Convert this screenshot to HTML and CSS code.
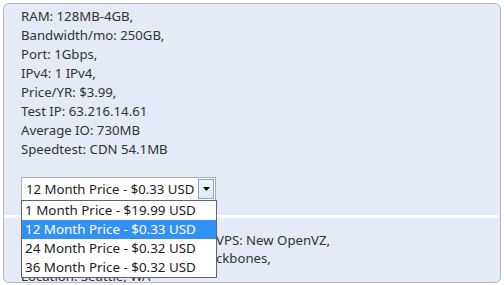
FILE: index.html
```html
<!DOCTYPE html>
<html>
<head>
<meta charset="utf-8">
<link rel="stylesheet" href="styles.css">
</head>
<body>
<div class="panel">
  <div class="specs">
    <div>RAM: 128MB-4GB,</div>
    <div>Bandwidth/mo: 250GB,</div>
    <div>Port: 1Gbps,</div>
    <div>IPv4: 1 IPv4,</div>
    <div>Price/YR: $3.99,</div>
    <div>Test IP: 63.216.14.61</div>
    <div>Average IO: 730MB</div>
    <div>Speedtest: CDN 54.1MB</div>
  </div>
  <div class="select-wrap">
    <div class="select">
      <span class="select-value">12 Month Price - $0.33 USD</span>
      <span class="select-btn">
        <svg width="7" height="4" viewBox="0 0 7 4"><path d="M0 0H7L3.5 4Z" fill="#000"/></svg>
      </span>
    </div>
    <ul class="options">
      <li>1 Month Price - $19.99 USD</li>
      <li class="active">12 Month Price - $0.33 USD</li>
      <li>24 Month Price - $0.32 USD</li>
      <li>36 Month Price - $0.32 USD</li>
    </ul>
  </div>
  <div class="divider"></div>
  <div class="specs next">
    <div><span class="pre">Virtualization Type: </span>VPS: New OpenVZ,</div>
    <div><span class="pre">Network: Multiple Ba</span>ckbones,</div>
    <div>Location: Seattle, WA</div>
  </div>
</div>
</body>
</html>
```
FILE: styles.css
```css
html, body {
  margin: 0;
  padding: 0;
  background: #ffffff;
}
body {
  padding: 3px 3px 0 3px;
  font-family: "Noto Sans", "Open Sans", sans-serif;
  font-size: 13.2px;
  color: #333333;
}
.panel {
  height: 278px;
  border: 1px solid #b3b7c1;
  border-radius: 6px;
  background: #e4eaf6;
  overflow: hidden;
  position: relative;
}
.specs {
  padding-left: 17px;
  line-height: 19px;
  padding-top: 3px;
  white-space: nowrap;
}
.select-wrap {
  position: relative;
  margin: 18px 0 0 17px;
  width: 195px;
  z-index: 2;
}
.select {
  display: flex;
  align-items: center;
  height: 22px;
  border: 1px solid #a9b1bc;
  background: #ffffff;
}
.select-value {
  flex: 1;
  padding-left: 4px;
  line-height: 22px;
  color: #222;
}
.select-btn {
  width: 14px;
  height: 18px;
  margin-right: 1px;
  border: 1px solid #7fa6d8;
  background: linear-gradient(#f2f6fb, #dfe8f4);
  display: flex;
  align-items: center;
  justify-content: center;
}
.options {
  position: absolute;
  left: 0;
  top: 23px;
  width: 194px;
  margin: 0;
  padding: 0;
  list-style: none;
  background: #ffffff;
  border: 1px solid #646464;
}
.options li {
  height: 19px;
  line-height: 19px;
  padding-left: 3px;
  color: #222;
  white-space: nowrap;
  font-size: 13.4px;
}
.options li.active {
  background: #3391f5;
  color: #ffffff;
}
.divider {
  height: 3px;
  background: #ffffff;
  margin: 14px 2px 0 0;
}
.specs.next {
  padding-top: 13px;
  line-height: 18px;
}
.pre {
  display: inline-block;
  width: 195px;
  overflow: hidden;
  vertical-align: top;
  text-align: right;
}
```
